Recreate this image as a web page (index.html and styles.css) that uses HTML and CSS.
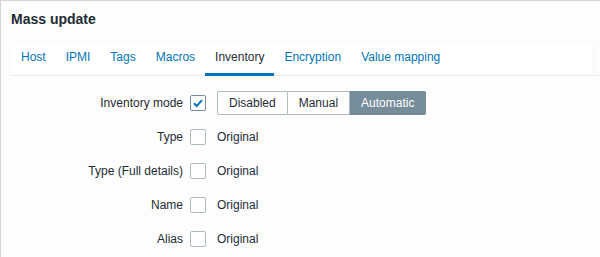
FILE: index.html
```html
<!DOCTYPE html>
<html>
<head>
<meta charset="utf-8">
<link rel="stylesheet" href="styles.css">
</head>
<body>
<div class="dialog">
  <h1 class="title">Mass update</h1>
  <div class="tabs-wrap">
    <ul class="tabs">
      <li class="tab">Host</li>
      <li class="tab">IPMI</li>
      <li class="tab">Tags</li>
      <li class="tab">Macros</li>
      <li class="tab active">Inventory</li>
      <li class="tab">Encryption</li>
      <li class="tab">Value mapping</li>
    </ul>
  </div>
  <div class="form">
    <div class="row">
      <label class="label">Inventory mode</label>
      <span class="cb checked"><svg width="14" height="14" viewBox="0 0 14 14"><polyline points="3,7.2 5.8,10 11,4.2" fill="none" stroke="#0275b8" stroke-width="2"/></svg></span>
      <div class="radio">
        <span class="seg">Disabled</span>
        <span class="seg">Manual</span>
        <span class="seg sel">Automatic</span>
      </div>
    </div>
    <div class="row">
      <label class="label">Type</label>
      <span class="cb"></span>
      <span class="value">Original</span>
    </div>
    <div class="row">
      <label class="label">Type (Full details)</label>
      <span class="cb"></span>
      <span class="value">Original</span>
    </div>
    <div class="row">
      <label class="label">Name</label>
      <span class="cb"></span>
      <span class="value">Original</span>
    </div>
    <div class="row">
      <label class="label">Alias</label>
      <span class="cb"></span>
      <span class="value">Original</span>
    </div>
  </div>
</div>
</body>
</html>
```

FILE: styles.css
```css
html, body {
  margin: 0;
  padding: 0;
}
body {
  background: #fdfdfd;
  font-family: "Liberation Sans", Arial, sans-serif;
  font-size: 12px;
  color: #1f2c33;
  width: 600px;
  height: 257px;
  overflow: hidden;
  box-sizing: border-box;
  border-top: 1px solid #cfd6db;
  border-left: 1px solid #cfd6db;
}
.dialog {
  padding-left: 10px;
}
.title {
  margin: 0;
  padding-top: 10px;
  font-size: 14px;
  line-height: 17px;
  font-weight: bold;
  color: #1f2c33;
  height: 33px;
  box-sizing: border-box;
  height: 43px;
}
.tabs-wrap {
  border-bottom: 1px solid #ebeef0;
}
.tabs {
  list-style: none;
  margin: 0;
  padding: 0;
  display: flex;
  width: 582px;
  background: #fff;
  height: 31px;
  box-shadow: 1px 0 0 #f6f6f6;
}
.tab {
  padding: 6px 10px 0;
  line-height: 14px;
  color: #0275b8;
  height: 31px;
  box-sizing: border-box;
  border-bottom: 3px solid transparent;
  margin-bottom: -1px;
  height: 32px;
}
.tab.active {
  color: #1f2c33;
  border-bottom-color: #0275b8;
}
.form {
  padding-top: 15px;
  display: flex;
  flex-direction: column;
  gap: 10px;
}
.row {
  display: flex;
  align-items: center;
  height: 24px;
}
.label {
  width: 172px;
  text-align: right;
  margin-right: 7px;
  line-height: 14px;
}
.cb {
  width: 16px;
  height: 16px;
  box-sizing: border-box;
  border: 1px solid #acbbc2;
  border-radius: 2px;
  background: #fff;
  margin-right: 11px;
  display: flex;
  align-items: center;
  justify-content: center;
}
.cb.checked {
  border-color: #768d99;
}
.value {
  line-height: 14px;
}
.radio {
  display: flex;
  height: 24px;
}
.seg {
  display: flex;
  align-items: center;
  padding: 0 11px;
  border: 1px solid #acbbc2;
  background: #fff;
  line-height: 14px;
}
.seg + .seg {
  border-left: none;
}
.seg:first-child {
  border-radius: 2px 0 0 2px;
}
.seg:last-child {
  border-radius: 0 2px 2px 0;
}
.seg.sel {
  background: #768d99;
  border-color: #768d99;
  color: #fff;
}
```
